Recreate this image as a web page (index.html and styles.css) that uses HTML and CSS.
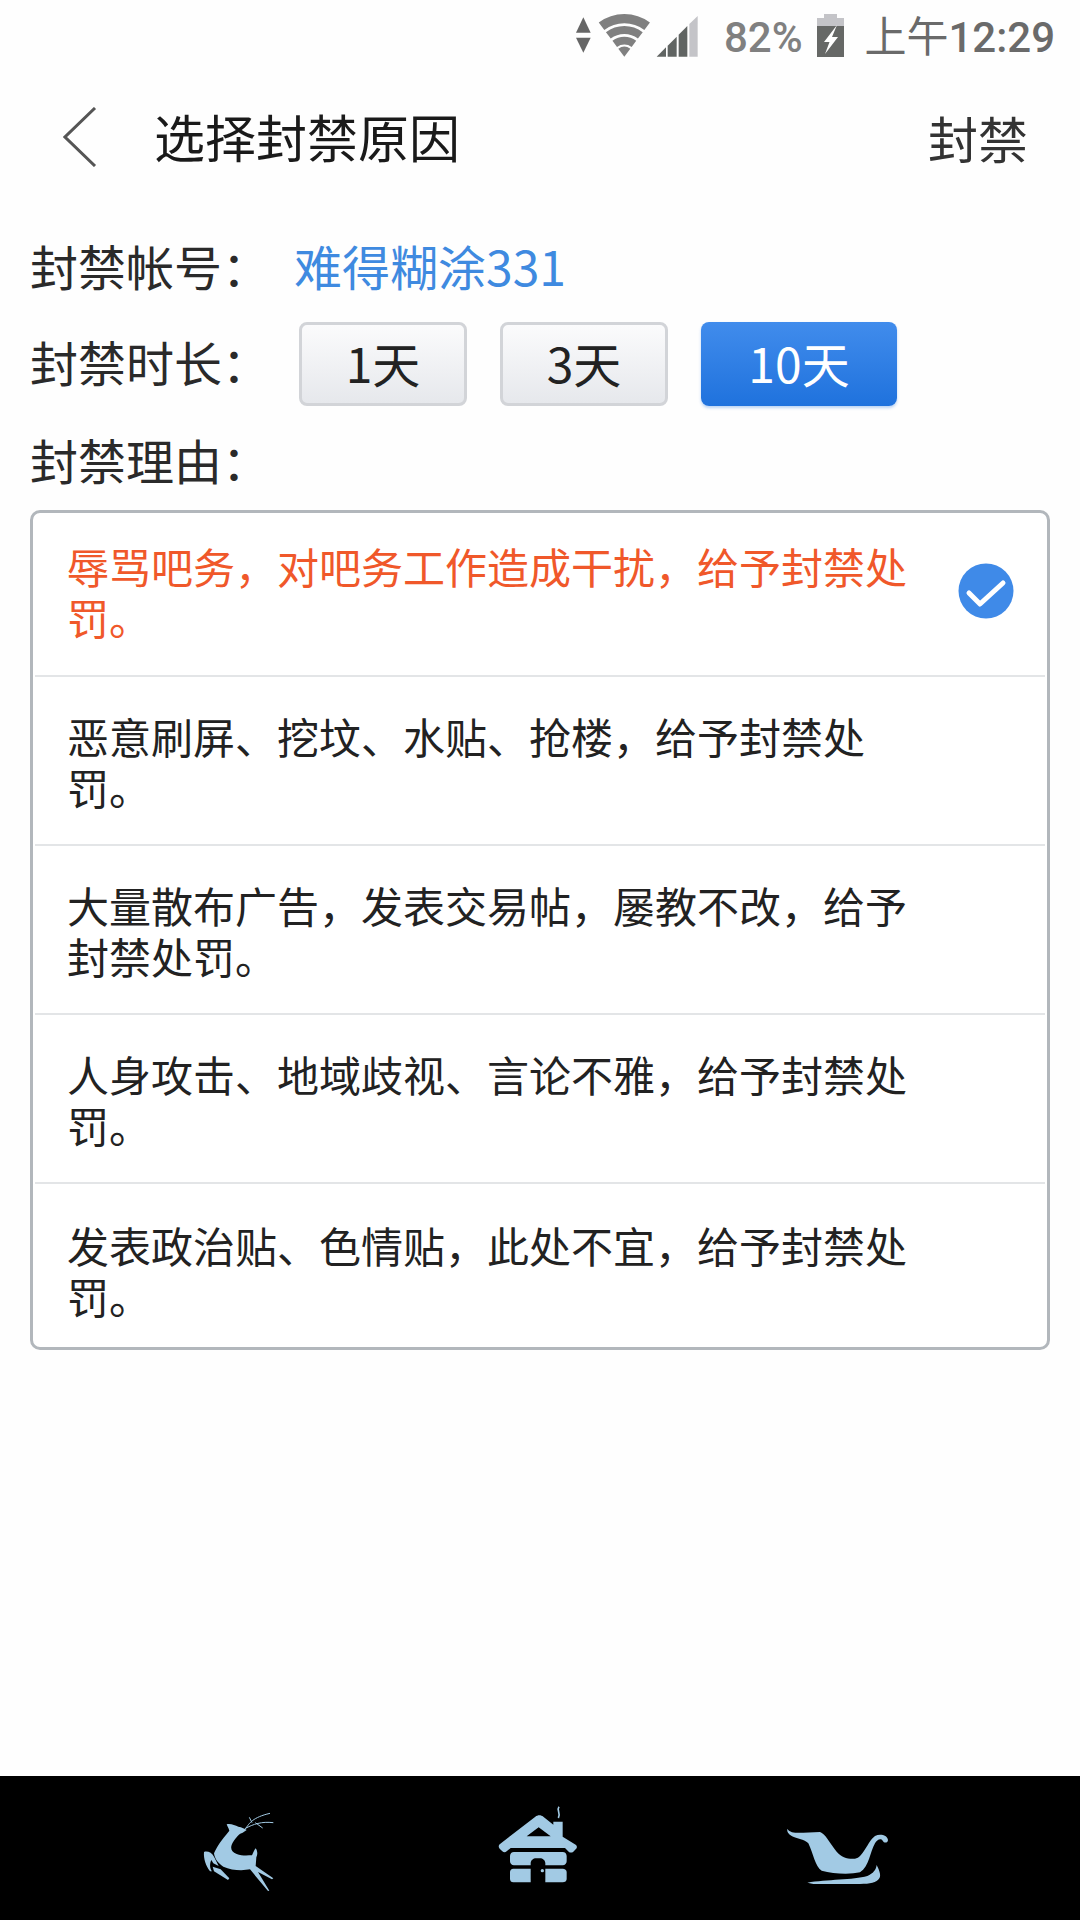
FILE: index.html
```html
<!DOCTYPE html>
<html lang="zh-CN">
<head>
<meta charset="utf-8">
<title>选择封禁原因</title>
<link rel="stylesheet" href="styles.css">
</head>
<body>
<div class="page">
  <div class="status">
    <svg class="st-icons" width="142" height="60" viewBox="0 0 426 180">
      <polygon class="s-dark" points="70,22 48,68 92,68"/>
      <polygon class="s-dark" points="48,83 92,83 70,128"/>
      <g class="s-wifi">
        <path d="M124.6 48.8A114 114 0 0 1 261.4 48.8" stroke-width="28"/>
        <path d="M145 76A80 80 0 0 1 241 76" stroke-width="24"/>
        <path d="M164.2 101.6A48 48 0 0 1 221.8 101.6" stroke-width="23"/>
      </g>
      <path class="s-wedge" d="M193 140L175 116A30 30 0 0 1 211 116Z"/>
      <polygon class="s-bar" points="290,140 318,112 318,140"/>
      <polygon class="s-bar" points="323,107 350,80 350,140 323,140"/>
      <polygon class="s-bar" points="356,74 382,48 382,140 356,140"/>
      <polygon class="s-light" points="388,42 413,18 413,140 388,140"/>
    </svg>
    <span class="st-pct">82%</span>
    <svg class="st-batt" width="27" height="43" viewBox="0 0 27 43">
      <rect class="s-light" x="7" y="0" width="13" height="5"/>
      <rect class="s-light" x="0" y="4" width="27" height="9"/>
      <rect class="s-batt" x="0" y="12" width="27" height="31"/>
      <polygon class="s-bolt" points="20,11 7,28 12.500,28 8,40 21,23 15,23"/>
    </svg>
    <span class="st-time"><span class="st-ampm">上午</span>12:29</span>
  </div>

  <header class="header">
    <svg class="back" width="34" height="60" viewBox="0 0 34 60">
      <path d="M32 1L2 30L32 59"/>
    </svg>
    <h1 class="title">选择封禁原因</h1>
    <span class="action">封禁</span>
  </header>

  <section class="form">
    <div class="row row-first">
      <span class="label">封禁帐号：</span>
      <span class="account">难得糊涂331</span>
    </div>
    <div class="row">
      <span class="label">封禁时长：</span>
      <div class="btns">
        <span class="btn">1天</span>
        <span class="btn">3天</span>
        <span class="btn btn-on">10天</span>
      </div>
    </div>
    <div class="row row-last">
      <span class="label">封禁理由：</span>
    </div>
  </section>

  <ul class="card">
    <li class="item item-on">
      <span class="item-text">辱骂吧务，对吧务工作造成干扰，给予封禁处罚。</span>
      <svg class="check" width="56" height="56" viewBox="0 0 56 56">
        <circle class="check-bg" cx="28" cy="28" r="27.500"/>
        <path class="check-mark" d="M11 30L22 41L45 20"/>
      </svg>
    </li>
    <li class="item"><span class="item-text">恶意刷屏、挖坟、水贴、抢楼，给予封禁处罚。</span></li>
    <li class="item"><span class="item-text">大量散布广告，发表交易帖，屡教不改，给予封禁处罚。</span></li>
    <li class="item"><span class="item-text">人身攻击、地域歧视、言论不雅，给予封禁处罚。</span></li>
    <li class="item"><span class="item-text">发表政治贴、色情贴，此处不宜，给予封禁处罚。</span></li>
  </ul>

  <nav class="nav">
    <span class="nav-item">
      <svg width="100" height="100" viewBox="0 0 300 300">
        <path class="ic" d="M110 73C122 70 135 76 145 80C155 82 165 86 170 90L158 98C148 100 138 112 128 128C120 142 122 155 140 162C155 168 172 166 186 166C190 158 192 150 197 145C202 152 204 162 199 172L197 198L250 235L246 238L204 216L238 272L234 273L180 208C160 212 125 212 100 200C84 190 74 176 72 160C80 140 95 120 118 92C116 84 112 80 110 73Z"/>
        <path class="ic" d="M42 156C52 152 66 158 72 170L86 198L70 190L64 180C58 192 60 206 66 214L60 214C48 198 40 176 42 156Z"/>
        <path class="ic" d="M68 200L92 208L118 235L114 240L72 214Z"/>
        <path class="ic-line" d="M168 84C178 70 188 52 240 40M165 86C190 72 215 64 250 68M186 68L178 52M196 68L218 84"/>
      </svg>
    </span>
    <span class="nav-item">
      <svg width="100" height="100" viewBox="0 0 300 300">
        <path class="ic" fill-rule="evenodd" d="M136 50C143 44 153 44 160 50L190 74V65H218V110L257 134C262 138 262 143 257 148L250 155C245 159 240 158 236 155L225 144H62L50 154C46 158 41 158 37 154L29 146C25 141 25 136 30 132ZM146 82L110 109H182Z"/>
        <path class="ic-line ic-smoke" d="M207 20C198 32 214 38 205 54"/>
        <path class="ic" d="M72 156H218C225 156 230 161 230 168V184C230 191 225 196 218 196H166V190C166 181 158 175 150 175H138C130 175 122 181 122 190V196H72C65 196 60 191 60 184V168C60 161 65 156 72 156Z"/>
        <path class="ic" d="M70 206H122V247H70C64 247 60 243 60 237V216C60 210 64 206 70 206Z"/>
        <path class="ic" d="M166 206H218C225 206 230 210 230 216V237C230 243 225 247 218 247H166Z"/>
        <circle class="ic-hole" cx="157" cy="212" r="5"/>
      </svg>
    </span>
    <span class="nav-item nav-sleigh">
      <svg width="120" height="90" viewBox="0 0 360 270">
        <path class="ic" d="M22 56C30 70 50 68 70 68L120 66C135 70 150 100 170 125C185 143 205 148 225 146C250 143 262 95 285 78C300 70 322 75 324 90C323 100 312 100 308 92C302 82 290 90 285 100C270 125 268 170 240 187C210 194 160 192 125 182C105 170 100 130 85 100C75 88 45 85 35 78C25 72 20 65 22 56Z"/>
        <path class="ic" d="M82 218C140 208 220 210 262 198C280 190 288 180 290 165C295 175 305 195 298 205C290 218 270 222 240 222L100 222Z"/>
      </svg>
    </span>
  </nav>
</div>
</body>
</html>
```

FILE: styles.css
```css
* { box-sizing: border-box; }
html, body { margin: 0; padding: 0; background: #fff; }
body { font-family: "Noto Sans CJK SC", "Noto Sans", sans-serif; color: #222; }

.page { width: 1080px; height: 1920px; display: flex; flex-direction: column; background: #fefefe; overflow: hidden; }

/* status bar */
.status { height: 75px; display: flex; align-items: center; padding-right: 25px; padding-left: 560px; }
.st-icons { display: block; flex: none; margin-top: 5px; }
.st-pct { margin-left: 22px; font-family: Roboto, sans-serif; font-weight: 500; font-size: 42px; color: #808080; line-height: 1; white-space: nowrap; }
.st-batt { display: block; flex: none; margin-left: 14px; margin-top: -4px; }
.st-time { margin-left: auto; font-family: Roboto, "Noto Sans CJK SC", sans-serif; font-weight: 500; font-size: 42px; color: #6a6a6a; line-height: 1; white-space: nowrap; }
.st-ampm { font-weight: 400; }
.s-dark { fill: #666; }
.s-wifi path { fill: none; stroke: #808080; }
.s-wedge { fill: #808080; }
.s-bar { fill: #606462; }
.s-light { fill: #c4c4c8; }
.s-batt { fill: #666866; }
.s-bolt { fill: #fff; }

/* header */
.header { height: 132px; display: flex; align-items: center; padding: 0 52px 8px 63px; }
.back { display: block; flex: none; }
.back path { fill: none; stroke: #555; stroke-width: 3; }
.title { margin: 0 0 0 57px; font-size: 51px; font-weight: 400; color: #1a1a1a; line-height: 1.2; }
.action { margin-left: auto; font-size: 50px; color: #333; line-height: 1.2; }

/* form */
.form { padding: 10px 0 0 30px; }
.row { height: 98px; display: flex; align-items: center; }
.row-first { padding-top: 3px; }
.row-last { height: 97px; }
.label { width: 264px; flex: none; padding-bottom: 4px; font-size: 48px; color: #2a2a2a; line-height: 1.2; }
.account { padding-bottom: 4px; font-size: 48px; color: #3f8ae0; line-height: 1.2; }
.btns { display: flex; gap: 33px; margin-left: 5px; }
.btn { width: 168px; height: 84px; flex: none; display: flex; align-items: center; justify-content: center; padding-bottom: 4px; border: 3px solid #d2d4d8; border-radius: 8px; background: linear-gradient(#fbfbfc, #e6e8ec); font-size: 48px; color: #222; }
.btn-on { width: 196px; border: 0; background: linear-gradient(#418cec, #1f72dd); color: #fff; box-shadow: 0 2px 3px rgba(31, 114, 221, .3); }

/* reasons */
.card { margin: 0 30px; padding: 0; height: 840px; list-style: none; border: 3px solid #b2b7bc; border-radius: 10px; display: flex; flex-direction: column; background: #fff; }
.item { height: 169px; flex: none; display: flex; align-items: center; padding-left: 32px; padding-right: 30px; border-bottom: 2px solid #e3e5e7; margin: 0 2px; font-size: 42px; line-height: 51px; }
.item:first-child { height: 164px; padding-bottom: 6px; }
.item:last-child { border-bottom: 0; height: 163px; padding-top: 8px; }
.item-text { width: 850px; flex: none; }
.item-on { color: #f0582a; }
.check { display: block; flex: none; margin-left: 41px; }
.check-bg { fill: #3f8ae8; }
.check-mark { fill: none; stroke: #fff; stroke-width: 5; stroke-linecap: round; stroke-linejoin: round; }

/* bottom nav */
.nav { margin-top: auto; height: 144px; background: #000; display: flex; justify-content: center; padding-top: 24px; }
.nav-item { width: 300px; display: flex; justify-content: center; align-items: flex-start; }
.nav-item svg { display: block; }
.nav-sleigh { padding-top: 10px; }
.ic { fill: #a2cae4; }
.ic-hole { fill: #a2cae4; }
.ic-line { fill: none; stroke: #a2cae4; stroke-width: 3; }
.ic-smoke { stroke-width: 5; }
```
